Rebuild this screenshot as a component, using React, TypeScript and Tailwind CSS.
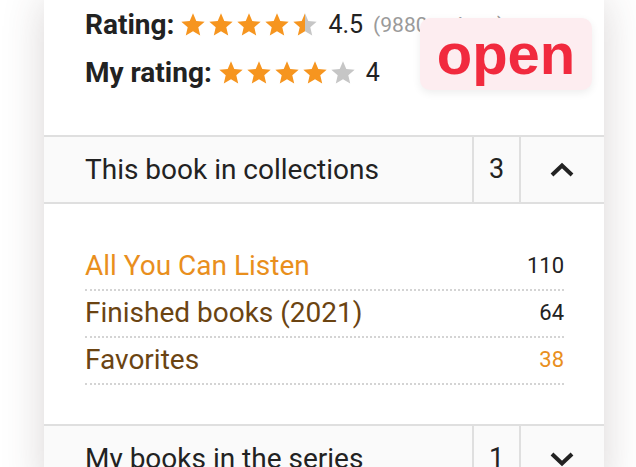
import React from "react";

const ORANGE = "#f6951f";
const GRAY = "#c6c6c6";
const STAR_D =
  "M12 17.27L18.18 21l-1.64-7.03L22 9.24l-7.19-.61L12 2 9.19 8.63 2 9.24l5.46 4.73L5.82 21z";

function Star({ fill, id }: { fill: "full" | "half" | "empty"; id: string }) {
  return (
    <svg width="28" height="28" viewBox="0 0 24 24" className="shrink-0">
      {fill === "half" && (
        <defs>
          <linearGradient id={id} x1="0" x2="1" y1="0" y2="0">
            <stop offset="50%" stopColor={ORANGE} />
            <stop offset="50%" stopColor={GRAY} />
          </linearGradient>
        </defs>
      )}
      <path
        d={STAR_D}
        fill={fill === "full" ? ORANGE : fill === "empty" ? GRAY : `url(#${id})`}
      />
    </svg>
  );
}

function Stars({ value, prefix }: { value: number; prefix: string }) {
  const items = [0, 1, 2, 3, 4].map((i) => {
    const f = value - i >= 1 ? "full" : value - i >= 0.5 ? "half" : "empty";
    return <Star key={i} fill={f as any} id={`${prefix}-${i}`} />;
  });
  return <div className="flex items-center">{items}</div>;
}

function Chevron({ up }: { up: boolean }) {
  return (
    <svg width="26" height="16" viewBox="0 0 26 16">
      <polyline
        points={up ? "3,13 13,3.5 23,13" : "3,3 13,12.5 23,3"}
        fill="none"
        stroke="#222"
        strokeWidth="4"
        strokeLinejoin="miter"
      />
    </svg>
  );
}

function Header({ title, count, up }: { title: string; count: number; up: boolean }) {
  return (
    <div className="flex h-[69px] border-y-2 border-[#dfdfdf] bg-[#fafafa]">
      <div className="flex flex-1 items-center pl-[41px] text-[28px] leading-[33px] text-[#222]">
        {title}
      </div>
      <div className="flex w-[47px] items-center justify-center border-l-2 border-[#dfdfdf] text-[27px] leading-[33px] text-[#222]">
        {count}
      </div>
      <div className="flex w-[85px] items-center justify-center border-l-2 border-[#dfdfdf] pr-[2px]">
        <Chevron up={up} />
      </div>
    </div>
  );
}

const rows = [
  { name: "All You Can Listen", count: "110", nameColor: "text-[#e98f1d]", countColor: "text-[#222]" },
  { name: "Finished books (2021)", count: "64", nameColor: "text-[#6b4412]", countColor: "text-[#222]" },
  { name: "Favorites", count: "38", nameColor: "text-[#6b4412]", countColor: "text-[#e98f1d]" },
];

export default function App() {
  return (
    <div
      className="h-[467px] w-[636px] overflow-hidden bg-white"
      style={{ fontFamily: "Roboto, 'Noto Sans', sans-serif" }}
    >
      <div className="relative ml-[44px] min-h-[467px] w-[560px] bg-white shadow-[0_0_40px_rgba(70,50,50,0.2)]">
        {/* ratings */}
        <div className="h-[135px] pt-[1px] pl-[41px]">
          <div className="flex h-[48px] items-center">
            <span className="text-[28px] font-bold leading-[32px] text-[#222]">Rating:</span>
            <div className="ml-[5px]">
              <Stars value={4.5} prefix="r" />
            </div>
            <span className="ml-[9px] text-[25px] leading-[30px] text-[#222]">4.5</span>
            <span className="ml-[10px] text-[21px] leading-[30px] text-[#9a9a9a]">(9880 ratings)</span>
          </div>
          <div className="flex h-[48px] items-center">
            <span className="text-[28px] font-bold leading-[32px] text-[#222]">My rating:</span>
            <div className="ml-[5px]">
              <Stars value={4} prefix="m" />
            </div>
            <span className="ml-[9px] text-[25px] leading-[30px] text-[#222]">4</span>
          </div>
        </div>

        {/* open badge */}
        <div className="absolute left-[376px] top-[18px] flex h-[72px] w-[172px] items-center justify-center rounded-[10px] bg-[#fdedf0] shadow-[0_3px_8px_rgba(0,0,0,0.07)]">
          <span
            className="text-[58px] font-bold leading-[58px] text-[#f12a3e]"
            style={{ fontFamily: "'Liberation Sans', Arial, sans-serif" }}
          >
            open
          </span>
        </div>

        <Header title="This book in collections" count={3} up={true} />

        <div className="pt-[40px] pb-[39px] pl-[41px] pr-[40px]">
          {rows.map((r) => (
            <div
              key={r.name}
              className="flex items-center justify-between border-b-2 border-dotted border-[#d4d4d4] pt-[5px] pb-[7px]"
            >
              <span className={`text-[28px] leading-[33px] ${r.nameColor}`}>{r.name}</span>
              <span className={`text-[22px] leading-[33px] ${r.countColor}`}>{r.count}</span>
            </div>
          ))}
        </div>

        <Header title="My books in the series" count={1} up={false} />
      </div>
    </div>
  );
}
